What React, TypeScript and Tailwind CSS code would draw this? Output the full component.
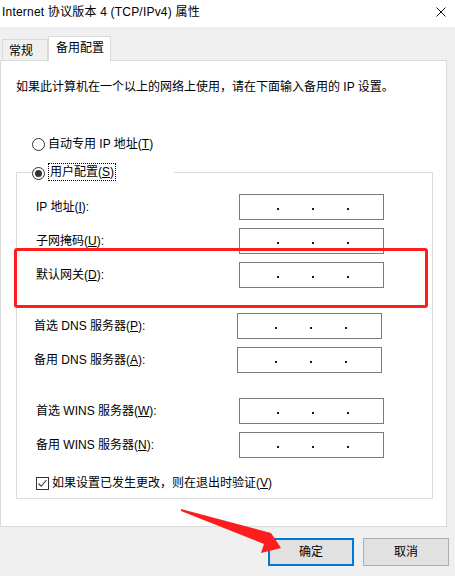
import React from "react";

const font = "font-['Liberation_Sans','Noto_Sans_CJK_SC',sans-serif]";

function Key({ k }: { k: string }) {
  return <span className="underline underline-offset-[1px]">{k}</span>;
}

function IpBox({ cls }: { cls?: string }) {
  return (
    <div className={`w-[145px] h-[26px] border border-[#7a7a7a] bg-white flex items-start pl-[37px] pt-[13px] gap-[33px] ${cls ?? ""}`}>
      <span className="w-[2px] h-[2px] bg-[#1a1a1a]" />
      <span className="w-[2px] h-[2px] bg-[#1a1a1a]" />
      <span className="w-[2px] h-[2px] bg-[#1a1a1a]" />
    </div>
  );
}

function Row({ label, k, cls, mt }: { label: string; k: string; cls: string; mt: string }) {
  return (
    <div className={`flex items-center justify-between ${cls} ${mt}`}>
      <span className="leading-[16px]">
        {label}(<Key k={k} />):
      </span>
      <IpBox />
    </div>
  );
}

export default function App() {
  return (
    <div className={`relative w-[455px] h-[576px] bg-[#f0f0f0] flex flex-col text-[12px] text-black ${font}`}>
      {/* title bar */}
      <div className="h-[27px] bg-white flex items-center justify-between pl-[2px] pr-[9px]">
        <span className="leading-[16px] -mt-[3px] tracking-[0.2px]">Internet 协议版本 4 (TCP/IPv4) 属性</span>
        <svg width="10" height="10" viewBox="0 0 10 10" className="-mt-[3px]">
          <path d="M0.5 0.5 L9.5 9.5 M9.5 0.5 L0.5 9.5" stroke="#111" strokeWidth="1" />
        </svg>
      </div>

      {/* tabs */}
      <div className="mt-[9px] h-[24px] flex items-end pl-[2px] relative z-10">
        <div className="w-[46px] h-[21px] border border-b-0 border-[#d9d9d9] bg-[#f0f0f0] pl-[6px] pt-[3px] leading-[16px]">
          常规
        </div>
        <div className="w-[63px] h-[25px] -mb-[1px] border border-b-0 border-[#d9d9d9] bg-white pl-[7px] pt-[3px] leading-[16px]">
          备用配置
        </div>
      </div>

      {/* panel */}
      <div className="w-[447px] h-[467px] bg-white border border-[#d9d9d9] flex flex-col">
        <div className="mt-[18px] pl-[15px] leading-[16px]">
          如果此计算机在一个以上的网络上使用，请在下面输入备用的 IP 设置。
        </div>

        <div className="mt-[41px] h-[16px] pl-[31px] flex items-center">
          <span className="w-[13px] h-[13px] rounded-full border border-[#333] bg-white" />
          <span className="ml-[3px] leading-[16px]">
            自动专用 IP 地址(<Key k="T" />)
          </span>
        </div>

        <fieldset className="mt-[11px] ml-[15px] w-[417px] border border-[#dcdcdc] pb-[7px]">
          <legend className="ml-[15px] w-[142px] h-[18px] flex items-center">
            <span className="w-[13px] h-[13px] mt-[3px] rounded-full border border-[#333] bg-white flex items-center justify-center">
              <span className="w-[7px] h-[7px] rounded-full bg-[#333]" />
            </span>
            <span className="ml-[3px] h-[18px] px-[1px] border border-dotted border-black leading-[16px]">
              用户配置(<Key k="S" />)
            </span>
          </legend>

          <Row label="IP 地址" k="I" cls="pl-[19px] pr-[48px]" mt="mt-[13px]" />
          <Row label="子网掩码" k="U" cls="pl-[19px] pr-[48px]" mt="mt-[8px]" />
          <Row label="默认网关" k="D" cls="pl-[19px] pr-[48px]" mt="mt-[8px]" />
          <Row label="首选 DNS 服务器" k="P" cls="pl-[17px] pr-[50px]" mt="mt-[25px]" />
          <Row label="备用 DNS 服务器" k="A" cls="pl-[17px] pr-[50px]" mt="mt-[8px]" />
          <Row label="首选 WINS 服务器" k="W" cls="pl-[19px] pr-[48px]" mt="mt-[25px]" />
          <Row label="备用 WINS 服务器" k="N" cls="pl-[19px] pr-[48px]" mt="mt-[8px]" />

          <div className="mt-[17px] h-[16px] pl-[19px] flex items-center">
            <span className="w-[13px] h-[13px] border border-[#333] bg-white flex items-center justify-center">
              <svg width="11" height="11" viewBox="0 0 11 11">
                <path d="M1.5 5.5 L4.2 8.3 L9.5 2" fill="none" stroke="#333" strokeWidth="1.1" />
              </svg>
            </span>
            <span className="ml-[3px] leading-[16px]">
              如果设置已发生更改，则在退出时验证(<Key k="V" />)
            </span>
          </div>
        </fieldset>
      </div>

      {/* buttons */}
      <div className="mt-[11px] flex justify-end gap-[9px] pr-[6px]">
        <button className="w-[86px] h-[28px] bg-[#e1e1e1] border-2 border-[#0078d7] leading-[16px]">确定</button>
        <button className="w-[86px] h-[28px] bg-[#e1e1e1] border border-[#adadad] leading-[16px]">取消</button>
      </div>

      {/* annotation: red rectangle */}
      <div className="absolute left-[14px] top-[248px] w-[414px] h-[60px] border-[3px] border-[#fd1d1d] rounded-[3px] pointer-events-none" />

      {/* annotation: red arrow */}
      <svg className="absolute left-0 top-0 pointer-events-none" width="455" height="576" viewBox="0 0 455 576">
        <polygon points="181,509 271,533 281,548 261,553 264,544 181,511" fill="#fd1d1d" />
      </svg>
    </div>
  );
}
